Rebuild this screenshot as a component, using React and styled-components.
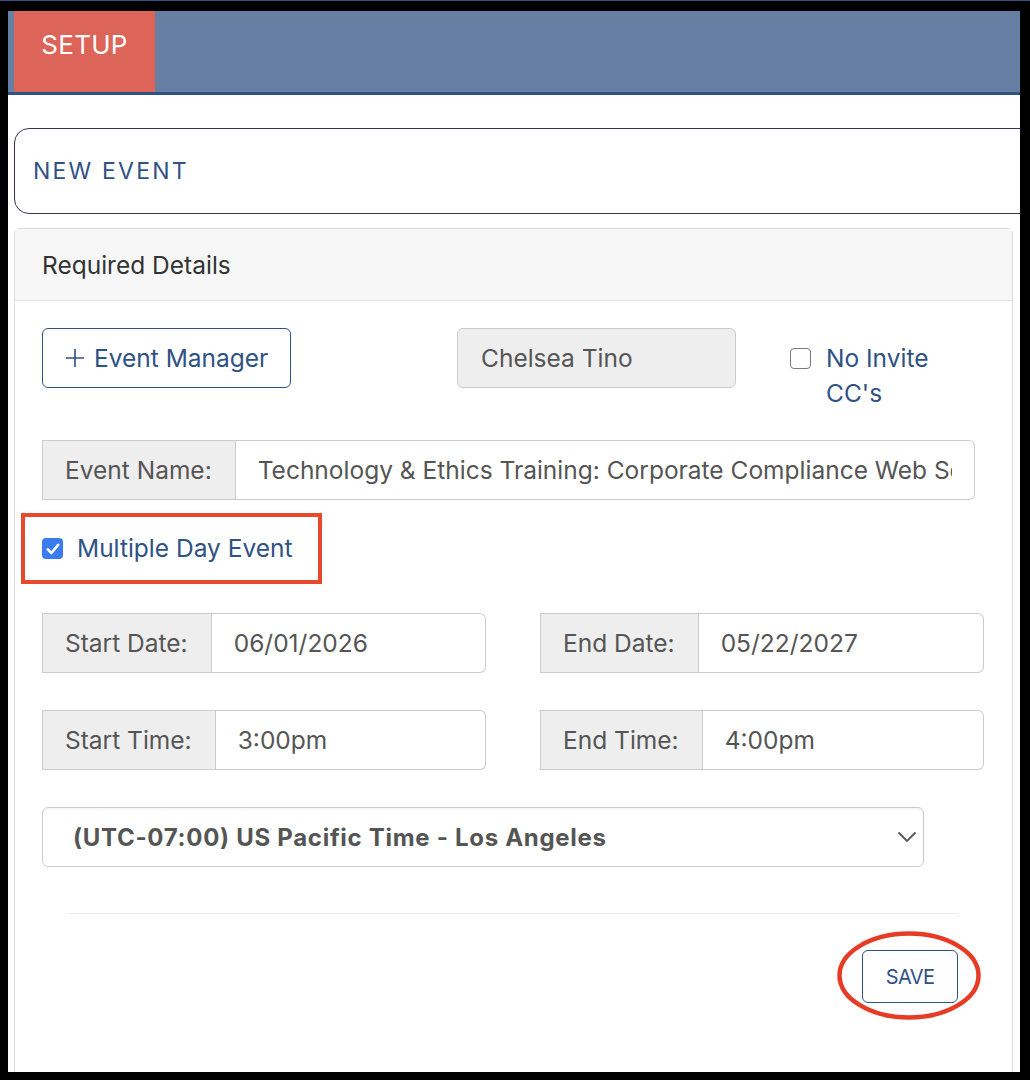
import React from 'react';
import styled, { createGlobalStyle } from 'styled-components';

const GlobalStyle = createGlobalStyle`
  * { box-sizing: border-box; }
  html, body {
    margin: 0;
    padding: 0;
    background: #000;
  }
  body {
    font-family: 'Inter', 'Liberation Sans', sans-serif;
    -webkit-font-smoothing: antialiased;
  }
`;

const BRAND = '#2f5285';
const BASE = 24.5;

const Page = styled.div`
  border-top: 1px solid #34527f;
  padding: 10px 10px 8px 8px;
  background: #000;
`;

const Frame = styled.div`
  height: 1061px;
  background: #fff;
  overflow: hidden;
`;

const TopBar = styled.div`
  display: flex;
  height: 84px;
  padding-left: 6px;
  background: #667fa3;
  border-bottom: 3px solid ${BRAND};
`;

const Tab = styled.div`
  width: 141px;
  padding-top: 21px;
  background: #dc6459;
  color: #fff;
  font-size: 26px;
  line-height: 26px;
  letter-spacing: 0.3px;
  text-align: center;
`;

const Content = styled.div`
  padding: 33px 7px 0 6px;
`;

const TitleBox = styled.div`
  display: flex;
  align-items: center;
  height: 86px;
  margin-right: -60px;
  padding-left: 18px;
  border: 1px solid #3d3151;
  border-radius: 15px;
  color: ${BRAND};
  font-size: 23px;
  letter-spacing: 2.2px;
`;

const Card = styled.div`
  margin-top: 14px;
  border: 1px solid #dcdcdc;
  border-radius: 5px;
`;

const CardHeader = styled.div`
  display: flex;
  align-items: center;
  height: 72px;
  padding-left: 27px;
  background: #f7f7f7;
  border-bottom: 1px solid #e3e3e3;
  color: #333;
  font-size: ${BASE}px;
`;

const CardBody = styled.div`
  padding: 27px 28px 90px 27px;
`;

const Row = styled.div`
  display: flex;
  align-items: flex-start;
  margin-top: ${p => p.$mt || 0}px;
`;

const ManagerRow = styled.div`
  display: grid;
  grid-template-columns: 415px 333px 1fr;
  align-items: start;
`;

const OutlineButton = styled.button`
  display: flex;
  align-items: center;
  justify-content: center;
  justify-self: start;
  gap: 9px;
  width: ${p => p.$w ? `${p.$w}px` : 'auto'};
  height: ${p => p.$h || 60}px;
  padding: 0 ${p => p.$px ?? 22}px;
  background: #fff;
  border: 1px solid ${BRAND};
  border-radius: 6px;
  color: ${BRAND};
  font-family: inherit;
  font-size: ${p => p.$fs || BASE}px;
  letter-spacing: ${p => p.$ls || 0}px;
  cursor: pointer;
`;

const ReadonlyField = styled.div`
  display: flex;
  align-items: center;
  width: 279px;
  height: 60px;
  padding: 0 23px;
  background: #eee;
  border: 1px solid #ccc;
  border-radius: 6px;
  color: #555;
  font-size: ${BASE}px;
`;

const CheckGroup = styled.label`
  display: flex;
  align-items: flex-start;
  gap: 15px;
  margin-top: 13px;
`;

const BoxUnchecked = styled.span`
  flex: none;
  width: 21px;
  height: 21px;
  margin-top: 7px;
  border: 1.5px solid #7a7a7a;
  border-radius: 4px;
  background: #fff;
`;

const BoxChecked = styled.span`
  flex: none;
  display: flex;
  align-items: center;
  justify-content: center;
  width: 21px;
  height: 21px;
  border-radius: 4px;
  background: #3a7bf0;
`;

const CheckText = styled.span`
  max-width: ${p => p.$max || 400}px;
  color: ${BRAND};
  font-size: ${BASE}px;
  line-height: ${p => p.$lh || 33}px;
`;

const Highlight = styled.div`
  display: flex;
  align-items: center;
  gap: 14px;
  width: 301px;
  height: 71px;
  margin: 13px 0 0 -21px;
  padding-left: 17px;
  border: 4px solid #e8482c;
`;

const InputGroup = styled.div`
  display: flex;
  width: ${p => p.$w ? `${p.$w}px` : '100%'};
  min-width: 0;
  height: 60px;
`;

const GroupLabel = styled.span`
  display: flex;
  align-items: center;
  flex: none;
  padding: 0 23px 0 22px;
  background: #eee;
  border: 1px solid #ccc;
  color: #555;
  font-size: ${BASE}px;
`;

const GroupInput = styled.input`
  flex: 1;
  min-width: 0;
  width: 0;
  padding: 0 22px;
  background: #fff;
  border: 1px solid #ccc;
  border-left: 0;
  border-radius: 0 6px 6px 0;
  color: #555;
  font-family: inherit;
  font-size: ${BASE}px;
  outline: none;
`;

const Pair = styled.div`
  display: grid;
  grid-template-columns: repeat(2, minmax(0, 1fr));
  column-gap: 54px;
  margin-top: ${p => p.$mt || 0}px;
`;

const SelectBox = styled.div`
  display: flex;
  align-items: center;
  justify-content: space-between;
  width: 882px;
  height: 60px;
  margin-top: 37px;
  padding: 0 6px 0 30px;
  border: 1px solid #ccc;
  border-radius: 6px;
  box-shadow: inset 0 2px 2px rgba(0, 0, 0, 0.04);
  color: #555;
  font-size: 24px;
  font-weight: 700;
  letter-spacing: 0.7px;
`;

const Divider = styled.hr`
  height: 1px;
  margin: 46px 26px 0 27px;
  border: 0;
  background: #e9e9e9;
`;

const Footer = styled.div`
  display: flex;
  justify-content: flex-end;
  margin: 36px 26px 0 0;
`;

const SaveWrap = styled.div`
  position: relative;
`;

const Ring = styled.svg`
  position: absolute;
  left: -25px;
  top: -19px;
  pointer-events: none;
`;

const PlusIcon = () => (
  <svg width="20" height="20" viewBox="0 0 20 20">
    <path d="M10 1v18M1 10h18" stroke={BRAND} strokeWidth="1.6" fill="none" />
  </svg>
);

const CheckMark = () => (
  <svg width="14" height="12" viewBox="0 0 14 12">
    <path d="M1.8 6.4l3.6 3.6L12.2 1.8" stroke="#fff" strokeWidth="2.6" fill="none" strokeLinecap="round" strokeLinejoin="round" />
  </svg>
);

const Chevron = () => (
  <svg width="20" height="12" viewBox="0 0 20 12">
    <polyline points="1.5,1.5 10,10 18.5,1.5" stroke="#555" strokeWidth="1.8" fill="none" />
  </svg>
);

const Field = ({ label, value, width }) => (
  <InputGroup $w={width}>
    <GroupLabel>{label}</GroupLabel>
    <GroupInput readOnly value={value} />
  </InputGroup>
);

const App = () => (
  <Page>
    <GlobalStyle />
    <Frame>
      <TopBar>
        <Tab>SETUP</Tab>
      </TopBar>
      <Content>
        <TitleBox>NEW EVENT</TitleBox>
        <Card>
          <CardHeader>Required Details</CardHeader>
          <CardBody>
            <ManagerRow>
              <OutlineButton>
                <PlusIcon />
                Event Manager
              </OutlineButton>
              <ReadonlyField>Chelsea Tino</ReadonlyField>
              <CheckGroup>
                <BoxUnchecked />
                <CheckText $max={112} $lh={35}>No Invite CC's</CheckText>
              </CheckGroup>
            </ManagerRow>

            <Row $mt={29}>
              <Field
                label="Event Name:"
                value="Technology & Ethics Training: Corporate Compliance Web Series"
                width={933}
              />
            </Row>

            <Highlight>
              <BoxChecked>
                <CheckMark />
              </BoxChecked>
              <CheckText>Multiple Day Event</CheckText>
            </Highlight>

            <Pair $mt={29}>
              <Field label="Start Date:" value="06/01/2026" />
              <Field label="End Date:" value="05/22/2027" />
            </Pair>
            <Pair $mt={37}>
              <Field label="Start Time:" value="3:00pm" />
              <Field label="End Time:" value="4:00pm" />
            </Pair>

            <SelectBox>
              <span>(UTC-07:00) US Pacific Time - Los Angeles</span>
              <Chevron />
            </SelectBox>

            <Divider />

            <Footer>
              <SaveWrap>
                <OutlineButton $w={96} $h={53} $px={0} $fs={20} $ls={-0.6}>
                  SAVE
                </OutlineButton>
                <Ring width="144" height="89" viewBox="0 0 144 89">
                  <ellipse cx="72" cy="44.5" rx="69.5" ry="42" stroke="#e63c25" strokeWidth="4.5" fill="none" />
                </Ring>
              </SaveWrap>
            </Footer>
          </CardBody>
        </Card>
      </Content>
    </Frame>
  </Page>
);

export default App;
